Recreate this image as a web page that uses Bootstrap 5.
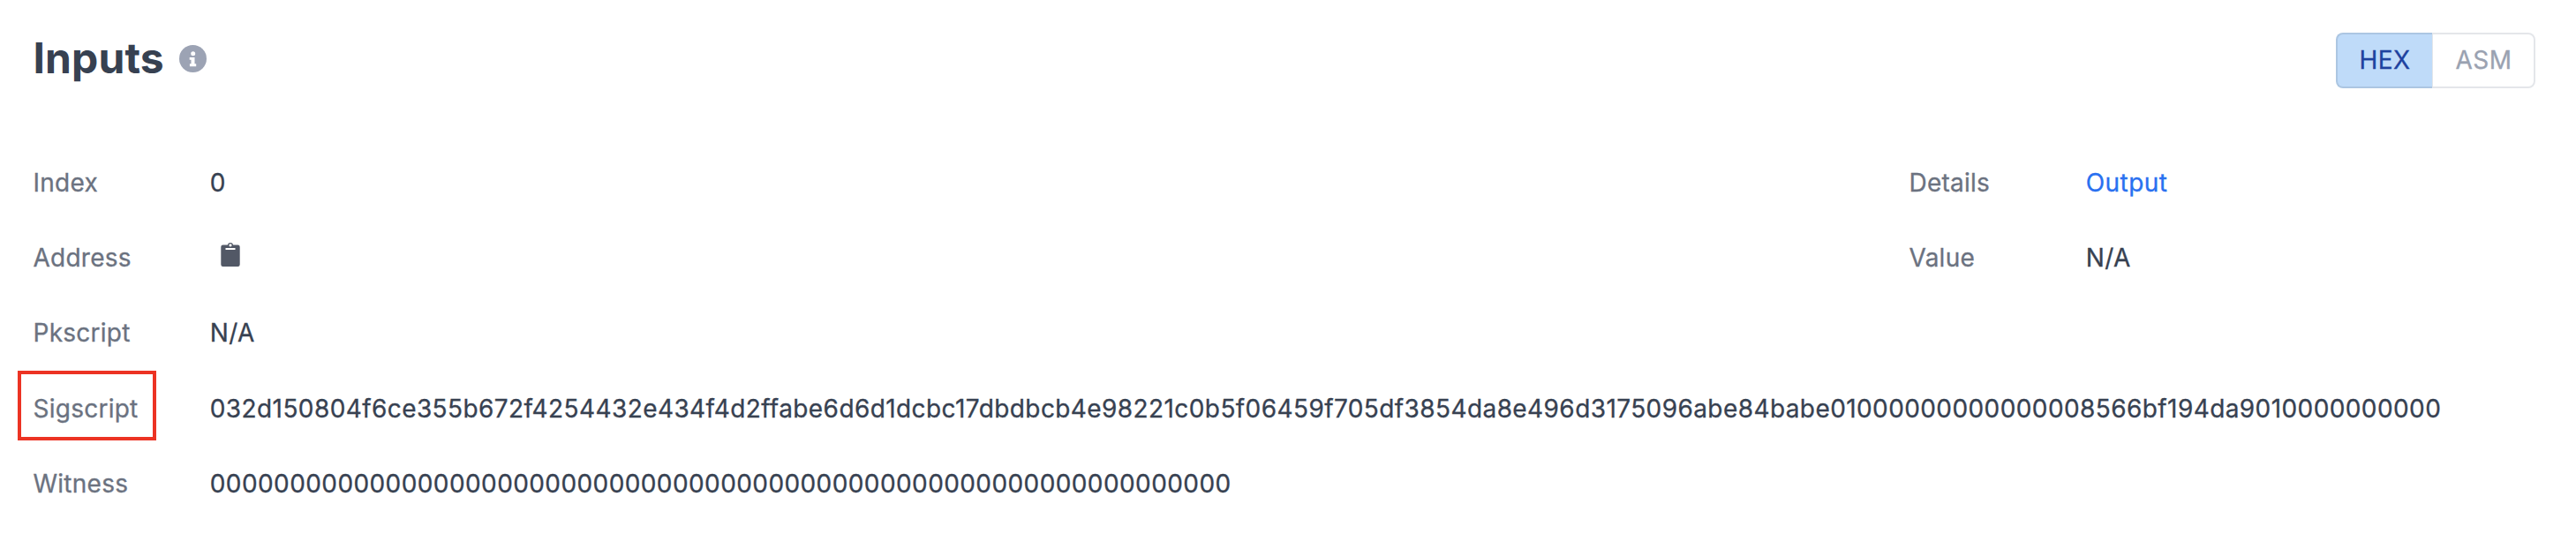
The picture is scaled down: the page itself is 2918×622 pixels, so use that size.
<!DOCTYPE html>
<html lang="en">
<head>
<meta charset="utf-8">
<meta name="viewport" content="width=device-width, initial-scale=1">
<title>Inputs</title>
<link href="https://cdn.jsdelivr.net/npm/bootstrap@5.3.0/dist/css/bootstrap.min.css" rel="stylesheet">
<style>
body { font-family: Inter, sans-serif; font-size: 28px; line-height: 42px; font-weight: 400; letter-spacing: .41px; -webkit-text-stroke: .3px; color: #374151; background: #fff; overflow: hidden; }
.tx-panel { padding: 37px 46px 0 37.5px; }
.tx-head { height: 63px; }
.tx-title { font-size: 48px; line-height: 60px; font-weight: 700; letter-spacing: .1px; -webkit-text-stroke: 0; padding-bottom: 5px; }
.info-icon { width: 31px; height: 31px; margin-left: 17px; margin-top: -5px; }
.view-toggle .btn { font-size: 28px; line-height: 40px; font-weight: 400; letter-spacing: .4px; border: 2px solid #e4e6ea; border-radius: 8px; padding: 9px 0 11px; color: #9aa2b1; height: 63px; }
.view-toggle .btn.active { background: #bfdbf9; border-color: #acc6e2; color: #1e429f; border-right: 0; width: 109px; }
.view-toggle .btn:not(.active) { margin-left: 0; padding-left: 1px; width: 118px; }
.fields { margin-top: 64px; }
.field { height: 85.2px; padding-top: 22px; white-space: nowrap; }
.field-name { width: 200.3px; color: #6b7280; letter-spacing: .25px; position: relative; flex: none; }
.side-col { width: 709.5px; }
.field a { color: #2970f0; }
.clip-icon { width: 22px; height: 28px; margin: 3px 0 0 12.2px; }
.marker { position: absolute; left: -17.5px; top: -22px; width: 157px; height: 79px; border: 4px solid #ec3323; }
</style>
</head>
<body>
<main class="tx-panel">
  <header class="tx-head d-flex justify-content-between">
    <div class="d-flex align-items-center">
      <h1 class="tx-title m-0">Inputs</h1>
      <svg class="info-icon" viewBox="0 0 31 31" aria-label="Info"><circle cx="15.5" cy="15.5" r="15.5" fill="#9ca3b4"/><circle cx="15.7" cy="9.7" r="2.5" fill="#fff"/><path d="M11.7 13.900h5.800v7.400h1.700v2.900h-7.300v-2.900h1.600v-4.500h-1.800z" fill="#fff"/></svg>
    </div>
    <div class="view-toggle btn-group" role="group" aria-label="Script format">
      <button type="button" class="btn active">HEX</button>
      <button type="button" class="btn">ASM</button>
    </div>
  </header>
  <section class="fields">
    <div class="d-flex justify-content-between">
      <div>
        <div class="field d-flex"><div class="field-name">Index</div><div>0</div></div>
        <div class="field d-flex"><div class="field-name">Address</div><div class="d-flex align-items-start"><svg class="clip-icon" viewBox="0 0 22 28" aria-label="Copy"><path fill="#525866" fill-rule="evenodd" d="M2.500 3.500h5.300a3.300 3.300 0 0 1 6.400 0h5.300a2.200 2.200 0 0 1 2.200 2.200v20a2.200 2.200 0 0 1-2.200 2.200h-17A2.200 2.200 0 0 1 .3 25.700V5.700A2.200 2.200 0 0 1 2.500 3.500zM11 2.200a1.600 1.600 0 1 0 0 3.200 1.600 1.600 0 0 0 0-3.200zM5.500 7.100v1.900h11V7.100z"/></svg></div></div>
      </div>
      <div class="side-col">
        <div class="field d-flex"><div class="field-name">Details</div><a href="#" class="text-decoration-none">Output</a></div>
        <div class="field d-flex"><div class="field-name">Value</div><div>N/A</div></div>
      </div>
    </div>
    <div class="field d-flex"><div class="field-name">Pkscript</div><div>N/A</div></div>
    <div class="field d-flex"><div class="field-name">Sigscript<span class="marker"></span></div><div>032d150804f6ce355b672f4254432e434f4d2ffabe6d6d1dcbc17dbdbcb4e98221c0b5f06459f705df3854da8e496d3175096abe84babe01000000000000008566bf194da9010000000000</div></div>
    <div class="field d-flex"><div class="field-name">Witness</div><div>0000000000000000000000000000000000000000000000000000000000000000</div></div>
  </section>
</main>
<script src="https://cdn.jsdelivr.net/npm/bootstrap@5.3.0/dist/js/bootstrap.bundle.min.js"></script>
</body>
</html>
